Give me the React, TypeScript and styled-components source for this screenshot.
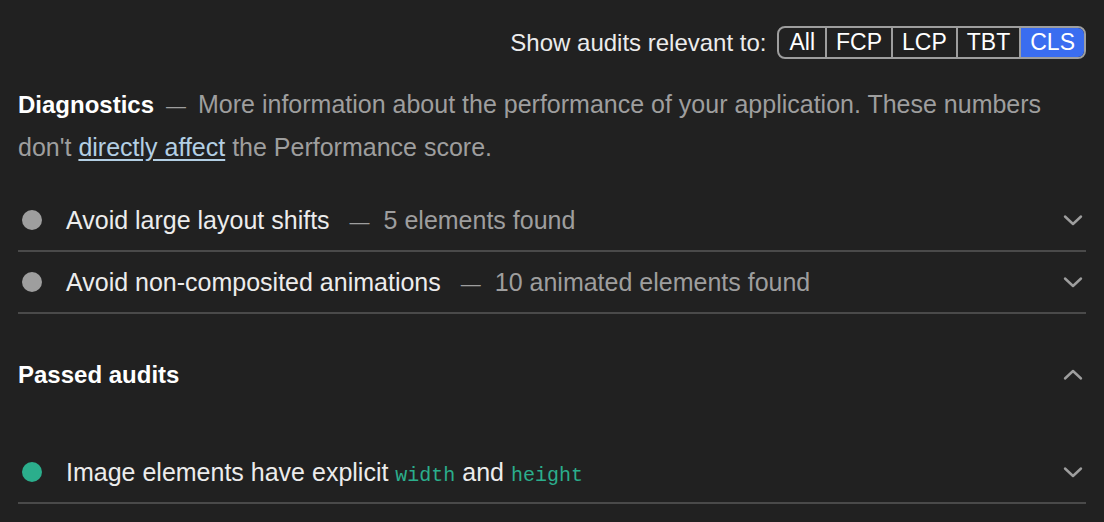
import React from 'react';
import styled, { createGlobalStyle } from 'styled-components';

const GlobalStyle = createGlobalStyle`
  html, body {
    margin: 0;
    padding: 0;
    background: #212121;
  }
  body {
    font-family: "Liberation Sans", Arial, Helvetica, sans-serif;
    -webkit-font-smoothing: antialiased;
  }
`;

const colors = {
  bg: '#212121',
  text: '#ececec',
  muted: '#9e9e9e',
  border: '#4a4a4a',
  blue: '#3a6df0',
  green: '#2bae8c',
  link: '#b3cfe4',
};

const Page = styled.div`
  width: 1104px;
  height: 522px;
  box-sizing: border-box;
  padding: 26px 18px 0;
  background: ${colors.bg};
  color: ${colors.text};
  font-size: 24px;
  overflow: hidden;
`;

const Toolbar = styled.div`
  display: flex;
  justify-content: flex-end;
  align-items: center;
  gap: 11px;
  height: 33px;
`;

const ToolbarLabel = styled.span`
  color: ${colors.text};
  font-size: 24px;
`;

const FilterGroup = styled.div`
  display: flex;
  height: 33px;
  box-sizing: border-box;
  border: 2px solid ${colors.muted};
  border-radius: 8px;
  overflow: hidden;
`;

const FilterButton = styled.button<{ $active?: boolean }>`
  border: none;
  border-left: 2px solid ${colors.muted};
  background: ${p => (p.$active ? colors.blue : 'transparent')};
  color: #fff;
  font-family: inherit;
  font-size: 23px;
  padding: 0 9px;
  height: 100%;
  cursor: pointer;

  &:first-child {
    border-left: none;
    padding: 0 10px;
  }
`;

const Description = styled.p`
  margin: 25px 0 0;
  line-height: 41px;
  font-size: 25px;
  color: ${colors.muted};
`;

const GroupTitle = styled.strong`
  color: #fff;
  font-weight: 700;
  font-size: 24px;
`;

const Dash = styled.span`
  font-size: 20px;
  margin: 0 12px;
`;

const Link = styled.a`
  color: ${colors.link};
  text-decoration: underline;
  text-underline-offset: 3px;
`;

const AuditList = styled.div`
  margin-top: 22px;
`;

const AuditRow = styled.div`
  display: flex;
  align-items: center;
  height: 60px;
  font-size: 25px;
  border-bottom: 2px solid ${colors.border};
`;

const Dot = styled.span<{ $pass?: boolean }>`
  flex: none;
  width: 20px;
  height: 20px;
  margin: 0 24px 0 4px;
  border-radius: 50%;
  background: ${p => (p.$pass ? colors.green : colors.muted)};
`;

const AuditTitle = styled.span`
  color: ${colors.text};
`;

const DisplayText = styled.span`
  color: ${colors.muted};
  margin-left: 20px;

  ${Dash} {
    margin: 0 14px 0 0;
  }
`;

const Code = styled.code`
  font-family: "Liberation Mono", "Courier New", monospace;
  font-size: 20px;
  color: ${colors.green};
`;

const Chevron = styled.svg`
  flex: none;
  margin-left: auto;
  margin-right: 1px;
`;

const PassedHeader = styled.div`
  display: flex;
  align-items: center;
  height: 42px;
  margin-top: 40px;
  margin-bottom: 46px;
  font-weight: 700;
  font-size: 24px;
  color: #fff;
`;

const ChevronIcon: React.FC<{ up?: boolean }> = ({ up }) => (
  <Chevron width="24" height="24" viewBox="0 0 24 24" fill="none">
    <path
      d={up ? 'M4 15.5l8-7.5 8 7.5' : 'M4 8.5l8 7.5 8-7.5'}
      stroke={colors.muted}
      strokeWidth="2.4"
      strokeLinecap="round"
      strokeLinejoin="round"
    />
  </Chevron>
);

const filters = ['All', 'FCP', 'LCP', 'TBT', 'CLS'];

const App: React.FC = () => {
  return (
    <>
      <GlobalStyle />
      <Page>
        <Toolbar>
          <ToolbarLabel>Show audits relevant to:</ToolbarLabel>
          <FilterGroup>
            {filters.map(f => (
              <FilterButton key={f} $active={f === 'CLS'}>
                {f}
              </FilterButton>
            ))}
          </FilterGroup>
        </Toolbar>

        <Description>
          <GroupTitle>Diagnostics</GroupTitle>
          <Dash>—</Dash>
          More information about the performance of your application. These numbers
          don't <Link href="#">directly affect</Link> the Performance score.
        </Description>

        <AuditList>
          <AuditRow>
            <Dot />
            <AuditTitle>Avoid large layout shifts</AuditTitle>
            <DisplayText>
              <Dash>—</Dash>5 elements found
            </DisplayText>
            <ChevronIcon />
          </AuditRow>
          <AuditRow>
            <Dot />
            <AuditTitle>Avoid non-composited animations</AuditTitle>
            <DisplayText>
              <Dash>—</Dash>10 animated elements found
            </DisplayText>
            <ChevronIcon />
          </AuditRow>
        </AuditList>

        <PassedHeader>
          Passed audits
          <ChevronIcon up />
        </PassedHeader>

        <AuditRow>
          <Dot $pass />
          <AuditTitle>
            Image elements have explicit <Code>width</Code> and <Code>height</Code>
          </AuditTitle>
          <ChevronIcon />
        </AuditRow>
      </Page>
    </>
  );
};

export default App;
